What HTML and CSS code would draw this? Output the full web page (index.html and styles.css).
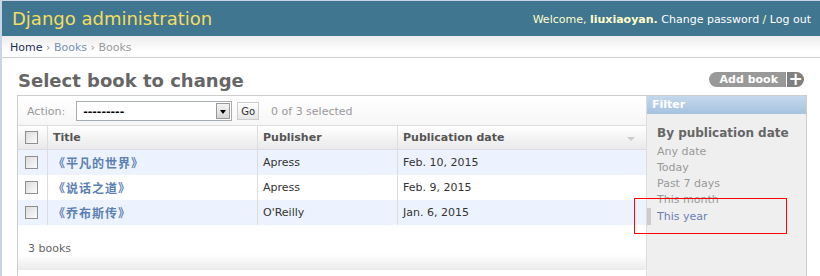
FILE: index.html
```html
<!DOCTYPE html>
<html lang="zh-CN">
<head>
  <meta charset="UTF-8" />
  <title>Select book to change | Django site admin</title>
  <link rel="stylesheet" href="styles.css">
</head>
<body>
  <div id="header">
    <h1 id="site-name">Django administration</h1>
    <div id="user-tools">
      Welcome, <strong>liuxiaoyan.</strong>
      <a href="#">Change password</a> / <a href="#">Log out</a>
    </div>
  </div>

  <div class="breadcrumbs">
    <a href="#" class="home">Home</a> &rsaquo; <a href="#">Books</a> &rsaquo; Books
  </div>

  <div id="content">
    <div class="title-row">
      <h1>Select book to change</h1>
      <a href="#" class="addlink"><span class="addlink-text">Add book</span><span class="addlink-plus">+</span></a>
    </div>

    <div id="changelist" class="module">
      <div class="results">
        <div class="actions">
          <label>Action:</label>
          <span class="select-wrap">
            <select>
              <option>---------</option>
            </select>
            <span class="select-arrow"></span>
          </span>
          <button type="button" class="go">Go</button>
          <span class="action-counter">0 of 3 selected</span>
        </div>

        <table id="result_list">
          <thead>
            <tr>
              <th class="col-check"><span class="checkbox"></span></th>
              <th class="col-title">Title</th>
              <th class="col-pub">Publisher</th>
              <th class="col-date">Publication date <span class="sort-arrow"></span></th>
            </tr>
          </thead>
          <tbody>
            <tr class="row1">
              <td class="col-check"><span class="checkbox"></span></td>
              <th class="col-title"><a href="#">《平凡的世界》</a></th>
              <td>Apress</td>
              <td>Feb. 10, 2015</td>
            </tr>
            <tr class="row2">
              <td class="col-check"><span class="checkbox"></span></td>
              <th class="col-title"><a href="#">《说话之道》</a></th>
              <td>Apress</td>
              <td>Feb. 9, 2015</td>
            </tr>
            <tr class="row1">
              <td class="col-check"><span class="checkbox"></span></td>
              <th class="col-title"><a href="#">《乔布斯传》</a></th>
              <td>O'Reilly</td>
              <td>Jan. 6, 2015</td>
            </tr>
          </tbody>
        </table>

        <p class="paginator">3 books</p>
      </div>

      <div id="changelist-filter">
        <h2>Filter</h2>
        <h3>By publication date</h3>
        <ul>
          <li><a href="#">Any date</a></li>
          <li><a href="#">Today</a></li>
          <li><a href="#">Past 7 days</a></li>
          <li><a href="#">This month</a></li>
          <li class="selected"><a href="#">This year</a></li>
        </ul>
      </div>
    </div>
  </div>

  <div class="annotation"></div>
</body>
</html>
```

FILE: styles.css
```css
body {
  margin: 0;
  height: 275px;
  overflow: hidden;
  border-top: 1px solid #c9d5e6;
  border-left: 2px solid #c9d5e6;
  background: #fff;
  color: #333;
  font-family: "DejaVu Sans", Verdana, sans-serif;
  font-size: 11px;
}
a {
  text-decoration: none;
}

/* header */
#header {
  height: 35px;
  display: flex;
  align-items: center;
  justify-content: space-between;
  padding: 0 9px 0 10px;
  background: #417690;
}
#site-name {
  margin: 0;
  font-size: 18px;
  font-weight: normal;
  color: #f5dd5d;
}
#user-tools {
  color: #ffc;
  font-size: 11px;
  padding-top: 2px;
}
#user-tools a {
  color: #fff;
}

.breadcrumbs {
  height: 21px;
  line-height: 23px;
  padding: 0 8px;
  background: linear-gradient(#ececec, #fff 70%);
  border-bottom: 1px solid #ccc;
  color: #999;
  font-size: 11px;
}
.breadcrumbs a {
  color: #7790b8;
}
.breadcrumbs a.home {
  color: #1b2f55;
}

/* content */
#content {
  padding: 0 13px 0 15px;
}
.title-row {
  display: flex;
  justify-content: space-between;
  align-items: flex-start;
}
.title-row h1 {
  margin: 12px 0 3px 1px;
  font-size: 18px;
  line-height: 22px;
  color: #666;
}
.addlink {
  display: flex;
  margin: 14px 3px 0 0;
  height: 15px;
  line-height: 15px;
  color: #fff;
  font-weight: bold;
  font-size: 11px;
}
.addlink-text {
  background: #999;
  border-radius: 8px 0 0 8px;
  padding: 0 8px 0 11px;
  border-right: 1px solid #fff;
}
.addlink-plus {
  background: #7f7f7f;
  border-radius: 0 8px 8px 0;
  width: 17px;
  text-align: center;
  font-size: 17px;
}

/* changelist */
#changelist {
  display: flex;
  border: 1px solid #ccc;
  height: 300px;
}
.results {
  flex: 1;
  display: flex;
  flex-direction: column;
}
.actions {
  height: 28px;
  display: flex;
  align-items: center;
  padding: 1px 9px 0;
  background: linear-gradient(#fff, #f6f6f6);
  border-bottom: 1px solid #ddd;
  color: #999;
}
.actions label {
  margin-right: 11px;
}
.select-wrap {
  position: relative;
  display: inline-block;
}
.actions select {
  appearance: none;
  width: 156px;
  height: 20px;
  margin: 0;
  padding: 0 6px;
  border: 1px solid #a5acb2;
  background: #fff;
  color: #000;
  font-family: inherit;
  font-size: 11px;
  font-weight: bold;
  display: block;
}
.select-arrow {
  position: absolute;
  right: 2px;
  top: 2px;
  width: 14px;
  height: 16px;
  background: linear-gradient(#f4f4f4, #d6d6d6);
  border: 1px solid #999;
  box-sizing: border-box;
}
.select-arrow::after {
  content: "";
  position: absolute;
  left: 3px;
  top: 6px;
  border-left: 3px solid transparent;
  border-right: 3px solid transparent;
  border-top: 4px solid #000;
}
.go {
  margin-left: 5px;
  height: 18px;
  padding: 0 3px;
  border: 1px solid #ccc;
  background: linear-gradient(#fff, #e6e6e6);
  font-family: inherit;
  font-size: 10px;
  color: #333;
}
.action-counter {
  margin-left: 12px;
}

#result_list {
  width: 100%;
  border-collapse: collapse;
}
#result_list th,
#result_list td {
  text-align: left;
  padding: 0 5px;
  border-left: 1px solid #ddd;
  font-size: 11px;
}
#result_list thead th {
  height: 23px;
  background: linear-gradient(#fff, #e9e9e9);
  border-bottom: 1px solid #ddd;
  color: #555;
  font-weight: bold;
}
#result_list tr > :first-child {
  border-left: none;
}
#result_list .col-check {
  width: 17px;
  padding: 0 5px 0 7px;
}
#result_list .col-title {
  width: 199px;
}
#result_list .col-pub {
  width: 129px;
}
.sort-arrow {
  float: right;
  margin: 6px 6px 0 0;
  border-left: 4px solid transparent;
  border-right: 4px solid transparent;
  border-top: 4px solid #ccc;
}
#result_list tbody td,
#result_list tbody th {
  height: 25px;
  color: #333;
}
#result_list tbody th a {
  color: #5b80b2;
  font-weight: bold;
  font-size: 12px;
  letter-spacing: 1px;
  font-family: "Noto Sans CJK SC", "DejaVu Sans", sans-serif;
}
#result_list tbody tr.row1 {
  background: #edf3fe;
}
.checkbox {
  display: block;
  width: 11px;
  height: 11px;
  border: 1px solid #8f8f8f;
  background: linear-gradient(135deg, #dcdcdc, #fbfbfb);
}
.paginator {
  margin: 0;
  height: 45px;
  line-height: 48px;
  padding: 0 10px;
  color: #666;
  background: linear-gradient(#fff 65%, #ebebeb);
}

/* filter */
#changelist-filter {
  width: 159px;
  background: #efefef;
  border-left: 1px solid #ddd;
}
#changelist-filter h2 {
  margin: 0;
  height: 18px;
  line-height: 18px;
  padding: 0 5px;
  background: linear-gradient(#c5d8ec, #a6c2df);
  color: #fff;
  font-size: 11px;
}
#changelist-filter h3 {
  margin: 11px 0 3px 10px;
  font-size: 12px;
  line-height: 16px;
  color: #666;
}
#changelist-filter ul {
  list-style: none;
  margin: 0;
  padding: 0;
}
#changelist-filter li {
  line-height: 16px;
  padding-left: 10px;
}
#changelist-filter li a {
  color: #999;
}
#changelist-filter li.selected {
  border-left: 4px solid #ccc;
  padding-left: 6px;
  line-height: 17px;
}
#changelist-filter li.selected a {
  color: #6a7eb4;
}

/* screenshot annotation box */
.annotation {
  position: absolute;
  left: 634px;
  top: 198px;
  width: 151px;
  height: 34px;
  border: 1px solid #f00;
}
```
